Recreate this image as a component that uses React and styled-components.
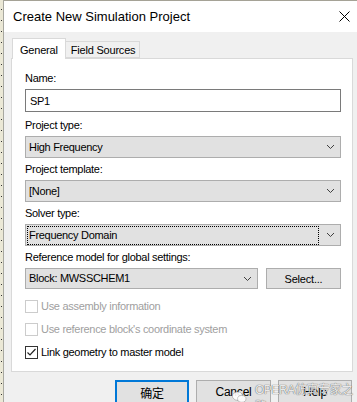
import React from "react";
import styled, { createGlobalStyle } from "styled-components";

const GlobalStyle = createGlobalStyle`
  html, body {
    margin: 0;
    padding: 0;
    background: #f0f0f0;
    overflow: hidden;
  }
  body {
    font-family: "Liberation Sans", Arial, sans-serif;
  }
`;

const Screen = styled.div`
  display: flex;
  flex-direction: row;
  width: 357px;
  height: 402px;
  overflow: hidden;
  position: relative;
`;

const DeskStrip = styled.div`
  width: 3px;
  flex: none;
  background-color: #ebe8d6;
  background-image: repeating-linear-gradient(
    to bottom,
    transparent 0px,
    transparent 9px,
    #333 9px,
    #333 10px,
    transparent 10px,
    transparent 11px
  );
  background-size: 1px 100%;
  background-position: 1px 0;
  background-repeat: no-repeat;
  border-right: 1px solid #a8a8a0;
`;

const Dialog = styled.div`
  flex: 1;
  display: flex;
  flex-direction: column;
  border-top: 1px solid #a5a296;
  background: #f0f0f0;
`;

const TitleBar = styled.div`
  height: 31px;
  flex: none;
  background: #fff;
  display: flex;
  align-items: center;
  justify-content: space-between;
  padding: 0 7px 0 9px;
`;

const Title = styled.span`
  font-size: 13px;
  color: #000;
`;

const Body = styled.div`
  flex: 1;
  display: flex;
  flex-direction: column;
  padding: 6px 4px 0 7px;
`;

const TabStrip = styled.div`
  display: flex;
  align-items: flex-end;
  height: 20px;
  padding-left: 1px;
  position: relative;
  z-index: 1;
`;

const Tab = styled.div`
  height: ${(p) => (p.active ? "21px" : "17px")};
  box-sizing: border-box;
  padding: ${(p) => (p.active ? "2px 7px 0 7px" : "1px 4px 0 5px")};
  font-size: 11px;
  letter-spacing: -0.2px;
  color: #000;
  background: ${(p) => (p.active ? "#fff" : "#f0f0f0")};
  border: 1px solid #d9d9d9;
  border-bottom: ${(p) => (p.active ? "none" : "1px solid #d9d9d9")};
  border-left: ${(p) => (p.first ? "1px solid #d9d9d9" : "none")};
  margin-bottom: ${(p) => (p.active ? "-1px" : "0")};
  display: flex;
  align-items: center;
`;

const Panel = styled.div`
  height: 314px;
  box-sizing: border-box;
  background: #fff;
  border: 1px solid #d9d9d9;
  padding: 11px 11px 0 13px;
  display: flex;
  flex-direction: column;
`;

const Label = styled.div`
  height: 16px;
  line-height: 16px;
  font-size: 11px;
  letter-spacing: -0.3px;
  color: #000;
  margin-top: ${(p) => p.gap || 0}px;
  margin-bottom: 3px;
`;

const TextInput = styled.div`
  height: 23px;
  box-sizing: border-box;
  border: 1px solid #7a7a7a;
  background: #fff;
  font-size: 11px;
  letter-spacing: -0.3px;
  display: flex;
  align-items: center;
  padding-left: 4px;
`;

const SelectBox = styled.div`
  height: ${(p) => p.h || 22}px;
  box-sizing: border-box;
  flex: ${(p) => (p.grow ? 1 : "none")};
  border: 1px solid #adadad;
  background: #e1e1e1;
  display: flex;
  align-items: center;
  padding: 0 5px 0 2px;
  font-size: 11px;
  letter-spacing: -0.3px;
`;

const SelectText = styled.span`
  flex: 1;
  height: 17px;
  line-height: 17px;
  padding-left: 1px;
  box-sizing: border-box;
  outline: ${(p) => (p.focused ? "1px dotted #000" : "none")};
  margin-right: ${(p) => (p.focused ? "6px" : "0")};
`;

const Chevron = styled.svg`
  width: 9px;
  height: 6px;
  flex: none;
  margin-left: 2px;
`;

const RefRow = styled.div`
  display: flex;
  gap: 8px;
`;

const Button = styled.div`
  width: ${(p) => p.w || 75}px;
  height: ${(p) => p.h || 24}px;
  box-sizing: border-box;
  flex: none;
  background: #e1e1e1;
  border: ${(p) => (p.primary ? "2px solid #0078d7" : "1px solid #adadad")};
  display: flex;
  align-items: center;
  justify-content: center;
  font-size: ${(p) => p.fs || 12}px;
  letter-spacing: -0.2px;
  font-family: "Liberation Sans", "Noto Sans CJK SC", sans-serif;
  color: #000;
`;

const CheckRow = styled.div`
  display: flex;
  align-items: center;
  height: 16px;
  margin-top: ${(p) => p.gap || 0}px;
  font-size: 11px;
  letter-spacing: -0.3px;
  color: ${(p) => (p.disabled ? "#a0a0a0" : "#000")};
`;

const CheckBox = styled.span`
  width: 13px;
  height: 13px;
  box-sizing: border-box;
  border: 1px solid ${(p) => (p.disabled ? "#cccccc" : "#333")};
  background: #fff;
  margin-right: 3px;
  display: flex;
  align-items: center;
  justify-content: center;
`;

const ButtonRow = styled.div`
  display: flex;
  justify-content: flex-end;
  gap: 7px;
  margin-top: 8px;
  padding-right: 1px;
`;

const Watermark = styled.div`
  position: absolute;
  left: 232px;
  top: 380px;
  display: flex;
  align-items: center;
  gap: 8px;
  font-family: "Liberation Sans", "Noto Sans CJK SC", sans-serif;
  font-size: 12px;
  letter-spacing: -0.4px;
  color: rgba(255, 255, 255, 0.9);
  text-shadow: 0 0 1px rgba(0, 0, 0, 0.55), 0 0 1px rgba(0, 0, 0, 0.4);
  pointer-events: none;
`;

function Arrow() {
  return (
    <Chevron viewBox="0 0 9 6">
      <path d="M1 1 L4.5 4.5 L8 1" fill="none" stroke="#404040" strokeWidth="1" />
    </Chevron>
  );
}

function Select({ value, focused, h, grow }) {
  return (
    <SelectBox h={h} grow={grow}>
      <SelectText focused={focused}>{value}</SelectText>
      <Arrow />
    </SelectBox>
  );
}

function Check({ checked, disabled, children, gap }) {
  return (
    <CheckRow disabled={disabled} gap={gap}>
      <CheckBox disabled={disabled}>
        {checked && (
          <svg width="11" height="11" viewBox="0 0 11 11">
            <path d="M1.5 5.5 L4 8 L9.5 2" fill="none" stroke="#222" strokeWidth="1.2" />
          </svg>
        )}
      </CheckBox>
      {children}
    </CheckRow>
  );
}

export default function App() {
  return (
    <Screen>
      <GlobalStyle />
      <DeskStrip />
      <Dialog>
        <TitleBar>
          <Title>Create New Simulation Project</Title>
          <svg width="11" height="11" viewBox="0 0 11 11">
            <path d="M0.5 0.5 L10.5 10.5 M10.5 0.5 L0.5 10.5" stroke="#000" strokeWidth="1" />
          </svg>
        </TitleBar>
        <Body>
          <TabStrip>
            <Tab active first>General</Tab>
            <Tab>Field Sources</Tab>
          </TabStrip>
          <Panel>
            <Label>Name:</Label>
            <TextInput>SP1</TextInput>
            <Label gap={5}>Project type:</Label>
            <Select value="High Frequency" />
            <Label gap={3}>Project template:</Label>
            <Select value="[None]" />
            <Label gap={3}>Solver type:</Label>
            <Select value="Frequency Domain" focused />
            <Label gap={3}>Reference model for global settings:</Label>
            <RefRow>
              <Select value="Block: MWSSCHEM1" h={21} grow />
              <Button w={75} h={21} fs={11}>Select...</Button>
            </RefRow>
            <Check disabled gap={9}>Use assembly information</Check>
            <Check disabled gap={7}>Use reference block's coordinate system</Check>
            <Check checked gap={7}>Link geometry to master model</Check>
          </Panel>
          <ButtonRow>
            <Button primary w={74}>确定</Button>
            <Button w={75}>Cancel</Button>
            <Button w={74}>Help</Button>
          </ButtonRow>
        </Body>
      </Dialog>
      <Watermark>
        <svg width="16" height="14" viewBox="0 0 16 14">
          <ellipse cx="6" cy="6" rx="5.5" ry="4.5" fill="rgba(255,255,255,0.9)" stroke="rgba(0,0,0,0.35)" strokeWidth="0.6" />
          <ellipse cx="10.5" cy="9" rx="4.5" ry="3.6" fill="rgba(255,255,255,0.9)" stroke="rgba(0,0,0,0.35)" strokeWidth="0.6" />
        </svg>
        <span>OPERA仿真专家之路</span>
      </Watermark>
    </Screen>
  );
}
